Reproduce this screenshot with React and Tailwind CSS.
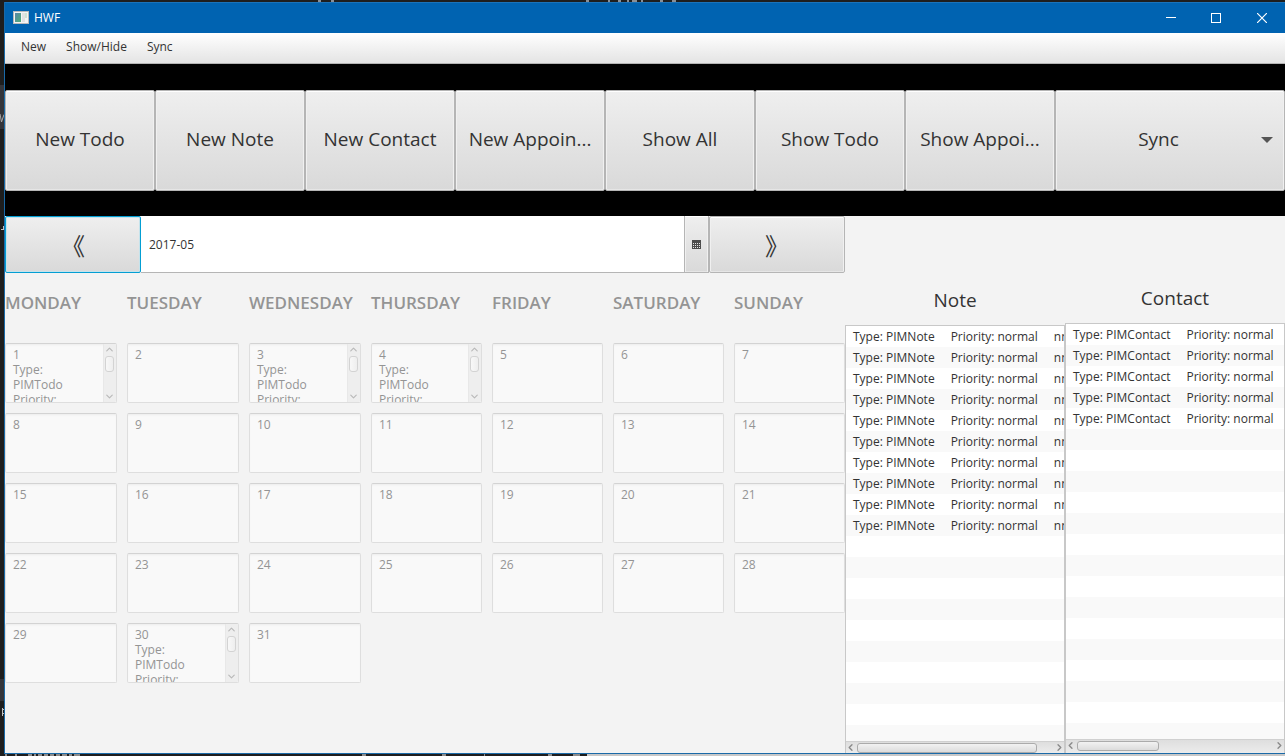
import { ChevronDown, ChevronLeft, ChevronRight, ChevronUp } from "lucide-react";

const menus = ["New", "Show/Hide", "Sync"];
const actions = [
  "New Todo",
  "New Note",
  "New Contact",
  "New Appoin...",
  "Show All",
  "Show Todo",
  "Show Appoi...",
];
const weekdays = ["MONDAY", "TUESDAY", "WEDNESDAY", "THURSDAY", "FRIDAY", "SATURDAY", "SUNDAY"];
const days = Array.from({ length: 31 }, (_, i) => i + 1);
const todoDays = [1, 3, 4, 30];

const face =
  "border border-[#b5b5b5] bg-linear-to-b from-[#efefef] to-[#d9d9d9] text-[#333333] shadow-[inset_0_1px_0_#ffffff,inset_1px_0_0_#f0f0f0,inset_-1px_0_0_#f0f0f0,inset_0_-1px_0_#e6e6e6]";
const week =
  "grid grid-cols-[112fr_112fr_112fr_111fr_111fr_111fr_111fr] gap-[10px]";
const arrowText = "font-['Noto_Sans_CJK_SC',sans-serif] text-[24px] leading-none";

function AppIcon() {
  return (
    <svg width="16" height="14" viewBox="0 0 16 14" aria-hidden="true">
      <defs>
        <linearGradient id="pane" x1="0" y1="0" x2="1" y2="1">
          <stop offset="0" stopColor="#5a86a8" />
          <stop offset="1" stopColor="#4fae78" />
        </linearGradient>
      </defs>
      <rect x="0.5" y="0.5" width="15" height="12" fill="#f4f4f4" stroke="#b9b9b9" />
      <rect x="2" y="2" width="6" height="9" fill="url(#pane)" />
      <rect x="9" y="2" width="3" height="9" fill="#e2e2e2" />
      <rect x="12" y="2" width="2" height="5" fill="#cfe3d4" />
    </svg>
  );
}

function TitleBar() {
  return (
    <header className="flex h-[31px] shrink-0 items-center border-t border-[#1a73ba] bg-[#0063b1] pl-2 text-white">
      <AppIcon />
      <h1 className="ml-[5px] flex-1 text-[12px]">HWF</h1>
      <button type="button" aria-label="Minimize" className="flex h-full w-[45px] items-center justify-center">
        <svg width="10" height="10" viewBox="0 0 10 10">
          <path d="M0 4.5h10" stroke="currentColor" />
        </svg>
      </button>
      <button type="button" aria-label="Maximize" className="flex h-full w-[46px] items-center justify-center">
        <svg width="10" height="10" viewBox="0 0 10 10">
          <rect x="0.5" y="0.5" width="9" height="9" fill="none" stroke="currentColor" />
        </svg>
      </button>
      <button type="button" aria-label="Close" className="flex h-full w-[46px] items-center justify-center">
        <svg width="10" height="10" viewBox="0 0 10 10">
          <path d="M0 0l10 10M10 0l-10 10" stroke="currentColor" strokeWidth="1.2" />
        </svg>
      </button>
    </header>
  );
}

function DayCell({ day }) {
  const hasTodo = todoDays.includes(day);
  return (
    <div className="flex h-[60px] overflow-hidden rounded-[2px] border border-[#dedede] border-t-[#d3d3d3] bg-[#f9f9f9] shadow-[inset_0_2px_2px_-1px_#ececec]">
      <textarea
        disabled
        aria-label={`May ${day}`}
        value={hasTodo ? `${day}\nType:\nPIMTodo\nPriority: normal` : `${day}`}
        readOnly
        className="block h-full min-w-0 flex-1 resize-none overflow-hidden pt-[3px] pr-2 pl-[7px] text-[12px] leading-[15px] text-[#949494]"
      />
      {hasTodo && (
        <div className="flex w-[13px] shrink-0 flex-col items-center justify-between border-l border-[#e8e8e8] bg-[#eeeeee] pr-px text-[#b9b9b9]">
          <ChevronUp size={11} strokeWidth={2.5} />
          <div className="mt-px mb-auto h-4 w-[9px] rounded-[3px] border border-[#d3d3d3] bg-linear-to-r from-[#f8f8f8] to-[#eeeeee]" />
          <ChevronDown size={11} strokeWidth={2.5} />
        </div>
      )}
    </div>
  );
}

function ScrollBar({ height, thumb }) {
  return (
    <div
      className={`flex shrink-0 items-start border-t border-[#d0d0d0] bg-linear-to-b from-[#dedede] to-[#ececec] text-[#8a8a8a] ${height}`}
    >
      <ChevronLeft size={11} strokeWidth={3} viewBox="2 0 24 24" className="shrink-0" />
      <div className="flex-1 pt-px">
        <div className={`h-[10px] rounded-[3px] border border-[#ababab] bg-linear-to-b from-[#f2f2f2] to-[#dcdcdc] ${thumb}`} />
      </div>
      <ChevronRight size={11} strokeWidth={3} viewBox="-2 0 24 24" className="shrink-0" />
    </div>
  );
}

function ListPane({ title, type, extra, count, top, barHeight, thumb }) {
  return (
    <section className={`flex min-h-0 min-w-0 flex-col ${top}`}>
      <h2 className="flex h-[50px] shrink-0 items-center justify-center text-[19px] text-[#333333]">{title}</h2>
      <div className="flex min-h-0 flex-1 flex-col border border-b-0 border-[#c8c8c8] bg-white">
        <ul className="min-h-0 flex-1 overflow-hidden text-[12px] text-[#333333]">
          {Array.from({ length: 20 }, (_, i) => (
            <li
              key={i}
              className="flex h-[21px] gap-4 overflow-hidden pl-[7px] leading-[21px] whitespace-nowrap even:bg-[#f9f9f9]"
            >
              {i < count && (
                <>
                  <span>Type: {type}</span>
                  <span>Priority: normal</span>
                  {extra && <span className="min-w-0 flex-1 overflow-hidden">{extra}</span>}
                </>
              )}
            </li>
          ))}
        </ul>
        <ScrollBar height={barHeight} thumb={thumb} />
      </div>
    </section>
  );
}

function DesktopEdge() {
  return (
    <svg width="4" height="754" viewBox="0 2 4 754" className="shrink-0" aria-hidden="true">
      <path d="M0 85h4v44H0zM0 679h4v22H0z" fill="#34353a" />
      <path d="M0 114l1.5 8L4 114.500" fill="none" stroke="#a8a8a8" />
      <path d="M1 229.500h3M3.500 226v4" stroke="#c0c0c0" />
      <path d="M2.500 708v8M3 709.500h1M3 713.500h1" stroke="#c0c0c0" />
    </svg>
  );
}

export default function App() {
  return (
    <div className="flex h-screen flex-col overflow-hidden bg-[#1e1e1e] font-['Open_Sans','Noto_Sans',sans-serif]">
      <svg height="2" className="w-full shrink-0" aria-hidden="true">
        <path d="M318 1h3M331 1h3M586 1h3M608 1h2M618 1h3M627 1h2M632 1h5M641 1h2M660 1h3M672 1h4" stroke="#8a8f96" strokeWidth="2" />
      </svg>
      <div className="flex min-h-0 flex-1">
        <DesktopEdge />
        <div className="flex min-h-0 min-w-0 flex-1 flex-col border-b border-l border-[#1a6aa8] bg-[#f3f3f3]">
          <TitleBar />
          <nav className="flex h-[31px] shrink-0 items-center gap-5 border-b border-[#b5b5b5] bg-linear-to-b from-white to-[#e4e4e4] pb-[2px] pl-4">
            {menus.map((m) => (
              <button key={m} type="button" className="text-[12px] text-[#333333]">
                {m}
              </button>
            ))}
          </nav>
          <div className="grid shrink-0 grid-cols-[repeat(7,150fr)_230fr] bg-black pt-[26px] pb-[25px]">
            {actions.map((a) => (
              <button key={a} type="button" className={`h-[101px] rounded-[2px] pb-[2px] text-[19px] whitespace-nowrap ${face}`}>
                {a}
              </button>
            ))}
            <button type="button" className={`flex h-[101px] items-center rounded-[2px] pr-[11px] pb-[2px] text-[19px] ${face}`}>
              <span className="flex-1">Sync</span>
              <svg width="12" height="6" viewBox="0 0 12 6" aria-hidden="true">
                <path d="M0 0h12L6 6z" fill="#555555" />
              </svg>
            </button>
          </div>
          <main className="grid min-h-0 flex-1 grid-cols-[840fr_220fr_220fr] grid-rows-[minmax(0,1fr)]">
            <section className="flex min-w-0 flex-col overflow-hidden">
              <div className="grid h-[57px] shrink-0 grid-cols-[136fr_568fr_136fr]">
                <button
                  type="button"
                  className={`rounded-[2px] border border-[#039ed3] bg-linear-to-b from-[#efefef] to-[#d9d9d9] text-[#333333] shadow-[inset_0_0_0_1px_#c5e3ec] ${arrowText}`}
                >
                  《
                </button>
                <div className="flex border-b border-[#b5b5b5] bg-white">
                  <input
                    type="text"
                    aria-label="Month"
                    defaultValue="2017-05"
                    className="min-w-0 flex-1 pt-[2px] pl-2 text-[12px] text-[#333333] outline-none"
                  />
                  <button type="button" aria-label="Open calendar" className={`flex w-[25px] items-center justify-center border-y-0 ${face}`}>
                    <svg width="9" height="9" viewBox="0 0 9 9" aria-hidden="true">
                      <rect width="9" height="9" fill="#4c4c4c" />
                      <path d="M1 3.5h7M1 5.5h7M1 7.5h7" stroke="#e4e4e4" strokeDasharray="1 1" />
                    </svg>
                  </button>
                </div>
                <button type="button" className={`rounded-[2px] ${arrowText} ${face}`}>
                  》
                </button>
              </div>
              <div className={`h-[70px] shrink-0 pb-[10px] text-[17px] font-semibold text-[#949494] ${week}`}>
                {weekdays.map((d) => (
                  <div key={d} className="flex min-w-0 items-center">
                    {d}
                  </div>
                ))}
              </div>
              <div className={`shrink-0 ${week}`}>
                {days.map((d) => (
                  <DayCell key={d} day={d} />
                ))}
              </div>
            </section>
            <ListPane title="Note" type="PIMNote" extra="nn" count={10} top="pt-[59px]" barHeight="h-3" thumb="w-[92%]" />
            <ListPane title="Contact" type="PIMContact" count={5} top="pt-[57px]" barHeight="h-[14px]" thumb="w-[42%]" />
          </main>
        </div>
      </div>
      <div className="flex h-[2px] shrink-0">
        <svg width="587" height="2" viewBox="0 0 587 2" aria-hidden="true">
          <path d="M5 1h2M15 1h2M28 1h4M34 1h2M38 1h4M44 1h4M50 1h4M56 1h4M62 1h5M69 1h3M74 1h6M362 1h4M442 1h4M484 1h1M548 1h4M573 1h7" stroke="#8c8c8c" strokeWidth="2" />
        </svg>
        <div className="flex-1 bg-[#c8c8c8]" />
      </div>
    </div>
  );
}
